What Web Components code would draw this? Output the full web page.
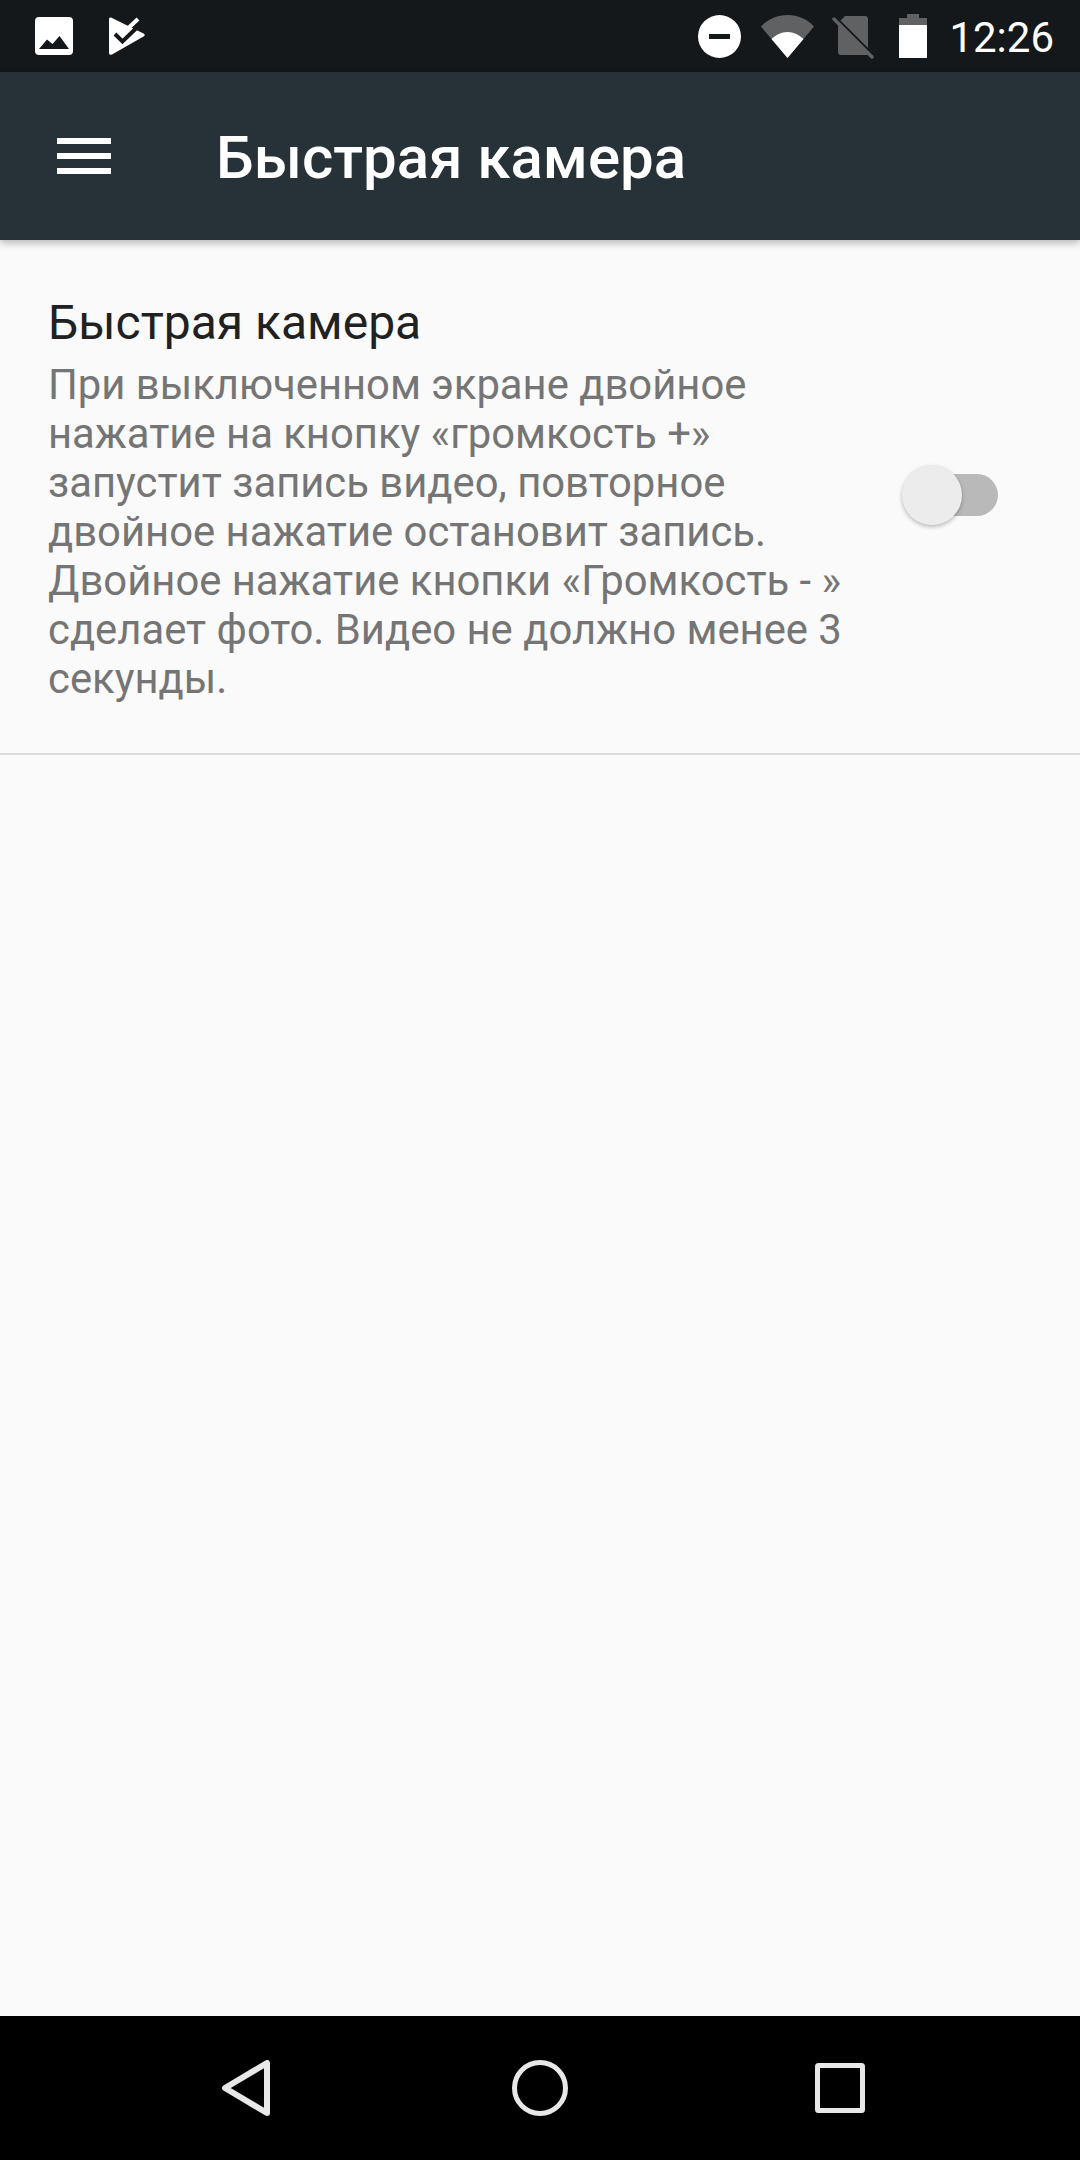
<!DOCTYPE html>
<html lang="ru">
<head>
<meta charset="utf-8">
<title>Быстрая камера</title>
<style>
  html, body { margin: 0; padding: 0; height: 100%; }
  body {
    display: flex; flex-direction: column;
    height: 2160px;
    background: #fafafa;
    font-family: Roboto, "Noto Sans", sans-serif;
  }
  pref-row { flex: none; }
  .filler { flex: 1; }
</style>
</head>
<body>
  <status-bar time="12:26"></status-bar>
  <app-toolbar title="Быстрая камера"></app-toolbar>
  <pref-row title="Быстрая камера">
    При выключенном экране двойное нажатие на кнопку «громкость +» запустит запись видео, повторное двойное нажатие остановит запись. Двойное нажатие кнопки «Громкость - » сделает фото. Видео не должно менее 3 секунды.
  </pref-row>
  <div class="filler"></div>
  <nav-bar></nav-bar>

<script>
(function () {
  function define(name, cls) {
    if (!customElements.get(name)) customElements.define(name, cls);
  }

  class StatusBar extends HTMLElement {
    connectedCallback() {
      if (!this.shadowRoot) this.attachShadow({ mode: 'open' });
      var time = this.getAttribute('time') || '';
      this.shadowRoot.innerHTML = `
        <style>
          :host { display: flex; flex: none; height: 72px; background: #14181b; align-items: center; color: #fff; }
          svg { display: block; flex: none; }
          .left { display: flex; align-items: center; padding-left: 35px; gap: 36px; }
          .right { margin-left: auto; display: flex; align-items: center; padding-right: 26px; }
          .time { font-size: 42px; line-height: 72px; margin: 3px 0 0 22px; }
        </style>
        <div class="left">
          <svg width="38" height="38" viewBox="0 0 38 38">
            <path fill="#fff" fill-rule="evenodd" d="M4 0h30a4 4 0 0 1 4 4v30a4 4 0 0 1-4 4H4a4 4 0 0 1-4-4V4a4 4 0 0 1 4-4zM4 32L12 22.500 17.500 27 24.500 19 34 32z"/>
          </svg>
          <svg width="36" height="38" viewBox="0 0 36 38">
            <path fill="#fff" d="M0 2Q0 0 2 .5L34.500 16.500Q37 18 34.500 19.500L3 37.500Q0 38.500 0 36z"/>
            <path fill="none" stroke="#fff" stroke-width="4" d="M13 17L29 2"/>
            <path fill="none" stroke="#14181b" stroke-width="4" d="M6 17L13.500 24.500 30 8.500"/>
          </svg>
        </div>
        <div class="right">
          <svg width="43" height="43" viewBox="0 0 43 43">
            <path fill="#fff" fill-rule="evenodd" d="M21.500 0a21.500 21.500 0 1 1 0 43a21.500 21.500 0 1 1 0-43zM11 19v5h21v-5z"/>
          </svg>
          <svg width="53" height="43" viewBox="0 0 53 43" style="margin-left:20px">
            <path fill="#5f6163" d="M0 11.500C7 4 16 0 26.500 0S46 4 53 11.500L26.500 43z"/>
            <path fill="#fff" d="M10.500 24C15 20 20 17 26.500 17s11.500 3 16 7L26.500 43z"/>
          </svg>
          <svg width="42" height="46" viewBox="0 0 42 46" style="margin-left:18px">
            <path fill="#5f6163" d="M13 3H33a3 3 0 0 1 3 3V35L8.500 7.500z"/>
            <path fill="#5f6163" d="M6 10L36 40V42H9a3 3 0 0 1-3-3z"/>
            <path stroke="#5f6163" stroke-width="3.500" stroke-linecap="round" d="M2 6L40 44"/>
          </svg>
          <svg width="28" height="44" viewBox="0 0 28 44" style="margin-left:25px">
            <path fill="#5f6163" d="M8 0h12v4h8v7H0V4h8z"/>
            <rect y="11" width="28" height="33" fill="#fff"/>
          </svg>
          <span class="time">${time}</span>
        </div>`;
    }
  }

  class AppToolbar extends HTMLElement {
    connectedCallback() {
      if (!this.shadowRoot) this.attachShadow({ mode: 'open' });
      this.shadowRoot.innerHTML = `
        <style>
          :host {
            display: flex; flex: none; align-items: center; height: 168px;
            background: #263238; color: #fff;
            box-shadow: 0 3px 8px rgba(0,0,0,.28);
            position: relative;
          }
          .menu { width: 54px; margin-left: 57px; display: flex; flex-direction: column; gap: 9px; }
          .menu i { display: block; height: 6px; background: #fff; }
          h1 { margin: 4px 0 0 105px; font-size: 60px; font-weight: 500; line-height: 1; }
        </style>
        <div class="menu"><i></i><i></i><i></i></div>
        <h1>${this.getAttribute('title') || ''}</h1>`;
    }
  }

  class ToggleSwitch extends HTMLElement {
    constructor() {
      super();
      this.attachShadow({ mode: 'open' }).innerHTML = `
        <style>
          :host { display: block; position: relative; width: 96px; height: 60px; flex: none; }
          .track { position: absolute; left: 7px; right: 0; top: 9px; height: 42px; border-radius: 21px; background: #b9b9b9; }
          .thumb {
            position: absolute; left: 0; top: 0; width: 60px; height: 60px; border-radius: 50%;
            background: #ececec;
            box-shadow: 0 2px 4px rgba(0,0,0,.26);
          }
        </style>
        <div class="track"></div>
        <div class="thumb"></div>`;
    }
  }

  class PrefRow extends HTMLElement {
    constructor() {
      super();
      this.attachShadow({ mode: 'open' });
    }
    connectedCallback() {
      this.shadowRoot.innerHTML = `
        <style>
          :host {
            display: flex; align-items: center; box-sizing: border-box; height: 515px;
            padding: 0 82px 0 48px; border-bottom: 2px solid #dcdcdc;
          }
          .text { width: 808px; flex: none; padding-top: 2px; }
          .title { font-size: 48px; line-height: 60px; color: #212121; }
          .summary { font-size: 41.800px; line-height: 49px; color: #757575; margin-top: 7px; }
          toggle-switch { margin-left: auto; margin-bottom: 3px; }
        </style>
        <div class="text">
          <div class="title">${this.getAttribute('title') || ''}</div>
          <div class="summary"><slot></slot></div>
        </div>
        <toggle-switch></toggle-switch>`;
    }
  }

  class NavBar extends HTMLElement {
    constructor() {
      super();
      this.attachShadow({ mode: 'open' }).innerHTML = `
        <style>
          :host { display: flex; flex: none; height: 144px; background: #000; align-items: center; padding-left: 222px; }
          svg { display: block; flex: none; }
        </style>
        <svg width="48" height="56" viewBox="0 0 48 56" style="margin-right:242px">
          <path fill="none" stroke="#e8e8e8" stroke-width="6" stroke-linejoin="round" d="M45 3V53L3 28z"/>
        </svg>
        <svg width="56" height="56" viewBox="0 0 56 56">
          <circle cx="28" cy="28" r="25.500" fill="none" stroke="#e8e8e8" stroke-width="5"/>
        </svg>
        <svg width="50" height="50" viewBox="0 0 50 50" style="margin-left:247px">
          <rect x="2.500" y="2.500" width="45" height="45" rx="1" fill="none" stroke="#e8e8e8" stroke-width="5"/>
        </svg>`;
    }
  }

  define('status-bar', StatusBar);
  define('app-toolbar', AppToolbar);
  define('toggle-switch', ToggleSwitch);
  define('pref-row', PrefRow);
  define('nav-bar', NavBar);
})();
</script>
</body>
</html>
